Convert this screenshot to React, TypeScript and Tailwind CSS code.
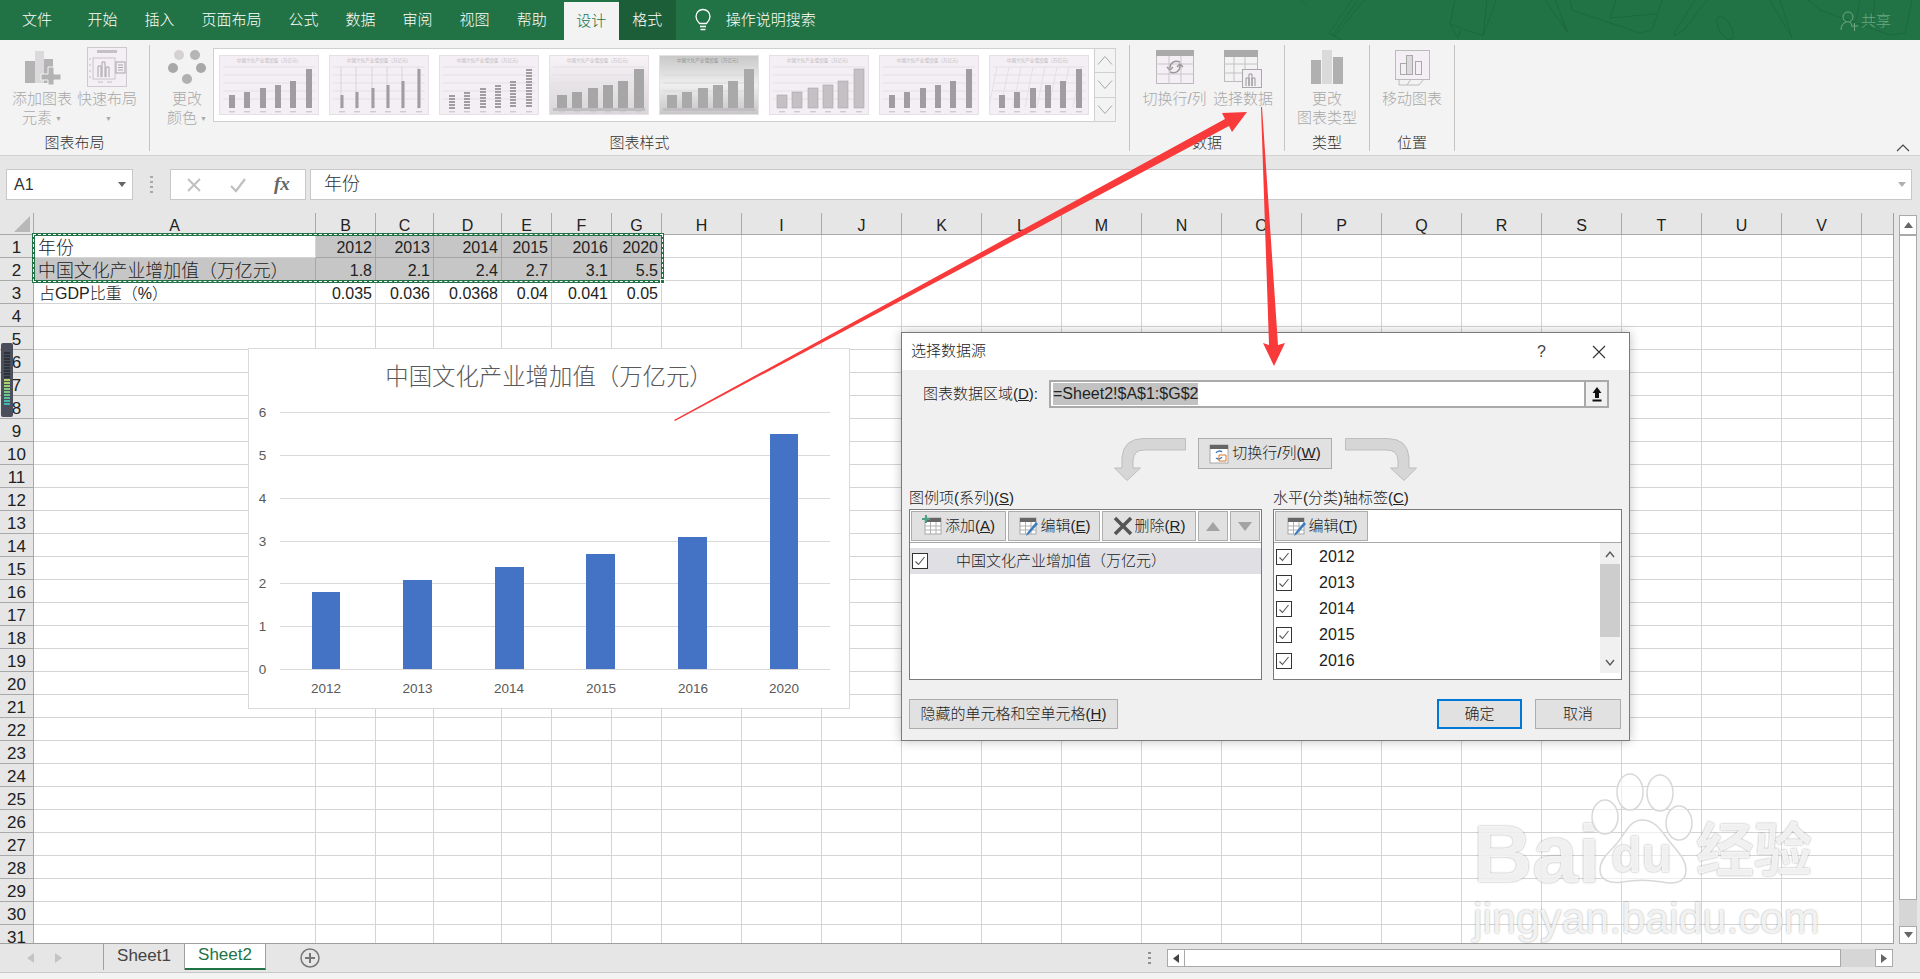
import React from 'react';

const tabs = ['开始', '插入', '页面布局', '公式', '数据', '审阅', '视图', '帮助'];
const colLabels = ['A', 'B', 'C', 'D', 'E', 'F', 'G', 'H', 'I', 'J', 'K', 'L', 'M', 'N', 'O', 'P', 'Q', 'R', 'S', 'T', 'U', 'V', ''];
const rows = Array.from({ length: 31 }, (_, i) => i + 1);
const sheetData: Record<number, string[]> = {
  1: ['年份', '2012', '2013', '2014', '2015', '2016', '2020'],
  2: ['中国文化产业增加值（万亿元）', '1.8', '2.1', '2.4', '2.7', '3.1', '5.5'],
  3: ['占GDP比重（%）', '0.035', '0.036', '0.0368', '0.04', '0.041', '0.05'],
};

function Thumb({ variant }: { variant: number }) {
  const xs = [10, 25, 41, 56, 71, 87];
  const tops = [40, 37, 33, 30, 26, 14];
  const wide = variant >= 3 && variant !== 7;
  const w = variant === 1 ? 3 : wide && variant !== 6 ? 10 : 6;
  const bg = variant === 4 ? 'url(#thumbDark)' : variant === 3 ? 'url(#thumbLight)' : '#f4eff4';
  const bar = variant === 5 ? '#c4c0c4' : variant === 4 ? '#a9a9a9' : variant === 3 ? '#a6a6a6' : '#a09ca0';
  return (
    <svg width="100" height="60" viewBox="0 0 100 60" className="shrink-0">
      <defs>
        <linearGradient id="thumbDark" x1="0" y1="0" x2="0" y2="1">
          <stop offset="0" stopColor="#c8c8c8" />
          <stop offset="0.5" stopColor="#efefef" />
          <stop offset="1" stopColor="#c6c6c6" />
        </linearGradient>
        <linearGradient id="thumbLight" x1="0" y1="0" x2="0" y2="1">
          <stop offset="0" stopColor="#f7f3f7" />
          <stop offset="1" stopColor="#d8d6d8" />
        </linearGradient>
      </defs>
      <rect x="0.5" y="0.5" width="99" height="59" fill={bg} stroke="#e6e0e6" />
      <text x="50" y="7" fontSize="4.6" textAnchor="middle" fill={variant === 4 ? '#777' : '#a8a4a8'}>
        中国文化产业增加值（万亿元）
      </text>
      {[12, 20, 28, 36, 44].map((y) => (
        <line key={y} x1="4" x2="96" y1={y} y2={y} stroke={variant === 4 ? '#d8d8d8' : '#e4dfe4'} strokeWidth="1" />
      ))}
      {variant === 1 && xs.map((x) => <line key={x} x1={x + 2} x2={x + 2} y1="12" y2="54" stroke="#d9d4d9" />)}
      {variant === 7 &&
        [8, 20, 32, 44, 56, 68, 80, 92].map((x) => <line key={x} x1={x} x2={x - 8} y1="12" y2="52" stroke="#e4dfe4" />)}
      {xs.map((x, i) => {
        const bx = x + (6 - w) / 2;
        if (variant === 2) {
          const bands = [];
          for (let y = tops[i]; y < 53; y += 3) {
            bands.push(<rect key={y} x={bx} y={y} width={w} height="2" fill="#a09ca0" />);
          }
          return <g key={x}>{bands}</g>;
        }
        return (
          <rect
            key={x}
            x={bx}
            y={tops[i]}
            width={w}
            height={53 - tops[i]}
            fill={bar}
            stroke={variant === 5 ? '#a9a5a9' : 'none'}
            strokeWidth="0.6"
          />
        );
      })}
      {(variant === 3 || variant === 4) && <rect x="4" y="53" width="92" height="3" fill="#c0bec0" />}
      {xs.map((x) => (
        <rect key={x} x={x} y="56" width="6" height="1.4" fill="#cfcacf" />
      ))}
    </svg>
  );
}

function BigBtn({ icon, lines, w, caret }: { icon: React.ReactNode; lines: string[]; w: string; caret?: boolean }) {
  return (
    <div className={`flex flex-col items-center ${w}`}>
      <div className="flex h-[44px] items-center justify-center">{icon}</div>
      {lines.map((l, i) => (
        <div key={i} className="h-[19px] whitespace-nowrap text-[15px] leading-[19px] text-[#a8a8a8] even:-mt-[0.5px]">
          {l}
          {caret && i === lines.length - 1 ? <span className="ml-[3px] align-middle text-[7px] text-[#a8a8a8]">▼</span> : null}
        </div>
      ))}
    </div>
  );
}

function RibbonGroup({ w, label, children }: { w: string; label: string; children: React.ReactNode }) {
  return (
    <div className={`mt-[5px] flex h-[106px] shrink-0 flex-col border-r border-[#c4c4c4] ${w}`}>
      <div className="flex h-[93px]">{children}</div>
      <div className="h-[16px] text-center text-[15px] leading-[16px] text-[#333]">{label}</div>
    </div>
  );
}

function SmallTable({ add, pencil }: { add?: boolean; pencil?: boolean }) {
  return (
    <svg width="22" height="22" viewBox="0 0 22 22" className="shrink-0">
      <rect x="3" y="3" width="16" height="16" fill="#fff" stroke="#a8a8a8" />
      <rect x="3" y="3" width="16" height="4" fill="#666" />
      <path d="M8.5 7v12M14 7v12M3 11h16M3 15h16" stroke="#b0b0b0" />
      {add && <path d="M3 0v8M-1 4h8" stroke="#4f9f80" strokeWidth="2" transform="translate(1 0)" />}
      {pencil && <path d="M19 7l2 2-9 10-3 2 1-3z" fill="#3d7cc0" />}
    </svg>
  );
}

function Check() {
  return (
    <svg width="16" height="16" viewBox="0 0 16 16" className="shrink-0">
      <rect x="0.5" y="0.5" width="15" height="15" fill="#fff" stroke="#333" />
      <path d="M3.5 8.5l3 3 6-7.5" fill="none" stroke="#555" strokeWidth="1.1" />
    </svg>
  );
}

function DlgBtn({ className, children }: { className: string; children: React.ReactNode }) {
  return (
    <div className={`flex h-[30px] items-center justify-center bg-[#e1e1e1] text-[15px] text-[#222] ${className}`}>
      {children}
    </div>
  );
}

function CurveArrow({ flip }: { flip?: boolean }) {
  return (
    <svg width="72" height="43" viewBox="0 0 72 43" className={`shrink-0 ${flip ? '-scale-x-100' : ''}`}>
      <path d="M71.5.5H30Q9 .5 8 20V30H.5L13 42.5 26.5 30H19V22Q20 12 30 12H71.5Z" fill="#d6d6d6" stroke="#bebebe" />
    </svg>
  );
}

function Dialog() {
  const grayBtn = 'border border-[#adadad]';
  return (
    <div className="absolute left-[901px] top-[332px] flex h-[409px] w-[729px] flex-col border border-[#7a7a7a] bg-[#f0f0f0] shadow-[0_0_10px_rgba(0,0,0,0.25)]">
      <div className="flex h-[37px] shrink-0 items-center bg-white pl-[9px] text-[15px] text-[#222]">
        <span>选择数据源</span>
        <span className="ml-[551px] text-[16px] text-[#444]">?</span>
        <svg width="14" height="14" viewBox="0 0 14 14" className="ml-[46px]">
          <path d="M1 1l12 12M13 1L1 13" stroke="#333" strokeWidth="1.1" />
        </svg>
      </div>
      <div className="flex flex-col pl-[7px] pr-[7px]">
        <div className="mt-[10px] flex h-[28px] items-center pl-[14px]">
          <span className="w-[126px] whitespace-nowrap text-[15px] text-[#222]">
            图表数据区域(<u>D</u>):
          </span>
          <div className="flex h-[28px] w-[560px] items-center border-2 border-[#a9a9a9] bg-white pl-[2px]">
            <span className="bg-[#c2c2c2] text-[16px] leading-[22px] text-[#222]">=Sheet2!$A$1:$G$2</span>
            <div className="ml-auto flex h-full w-[23px] items-center justify-center border-l-2 border-[#a9a9a9] bg-[#f0f0f0]">
              <svg width="12" height="16" viewBox="0 0 12 16">
                <path d="M6 1L1.5 7H4v5h4V7h2.5zM1.5 13.5h9v2h-9z" fill="#111" />
              </svg>
            </div>
          </div>
        </div>
        <div className="mt-[30px] flex h-[43px] items-start pl-[205px]">
          <CurveArrow />
          <div className="ml-[12px] flex h-[31px] w-[134px] items-center justify-center gap-[3px] border border-[#adadad] bg-[#e1e1e1] text-[15px] text-[#222]">
            <svg width="20" height="20" viewBox="0 0 20 20">
              <rect x="1" y="1" width="18" height="18" fill="#fff" stroke="#a8a8a8" />
              <rect x="1" y="1" width="18" height="4" fill="#666" />
              <path d="M13 8a4 4 0 0 0-6 1M7 14a4 4 0 0 0 6-1" fill="none" stroke="#3d7cc0" strokeWidth="1.4" />
              <path d="M10 11h7v6h-7z" fill="none" stroke="#d9772c" />
            </svg>
            <span>
              切换行/列(<u>W</u>)
            </span>
          </div>
          <div className="ml-[13px]">
            <CurveArrow flip />
          </div>
        </div>
        <div className="mt-[7px] flex gap-[11px]">
          <div className="w-[353px]">
            <div className="h-[20px] whitespace-nowrap text-[15px] leading-[20px] text-[#222]">
              图例项(系列)(<u>S</u>)
            </div>
            <div className="mt-[1px] h-[171px] border border-[#7a7a7a] bg-white">
              <div className="flex h-[33px] gap-[2px] border-b border-[#a8a8a8] pl-[1px] pt-[1px]">
                <DlgBtn className={`w-[95px] gap-[1px] ${grayBtn}`}>
                  <SmallTable add />
                  <span>
                    添加(<u>A</u>)
                  </span>
                </DlgBtn>
                <DlgBtn className={`w-[92px] gap-[1px] ${grayBtn}`}>
                  <SmallTable pencil />
                  <span>
                    编辑(<u>E</u>)
                  </span>
                </DlgBtn>
                <DlgBtn className={`w-[94px] gap-[2px] ${grayBtn}`}>
                  <svg width="20" height="20" viewBox="0 0 20 20">
                    <path d="M2 2l16 16M18 2L2 18" stroke="#555" strokeWidth="3.5" />
                  </svg>
                  <span>
                    删除(<u>R</u>)
                  </span>
                </DlgBtn>
                <DlgBtn className={`w-[30px] ${grayBtn}`}>
                  <svg width="14" height="9" viewBox="0 0 14 9">
                    <path d="M7 0l7 9H0z" fill="#a3a3a3" />
                  </svg>
                </DlgBtn>
                <DlgBtn className={`w-[30px] ${grayBtn}`}>
                  <svg width="14" height="9" viewBox="0 0 14 9">
                    <path d="M0 0h14L7 9z" fill="#a3a3a3" />
                  </svg>
                </DlgBtn>
              </div>
              <div className="mt-[5px] flex h-[26px] items-center bg-[#e0e0e4] pl-[2px] text-[15px] text-[#222]">
                <Check />
                <span className="ml-[28px] whitespace-nowrap">中国文化产业增加值（万亿元）</span>
              </div>
            </div>
          </div>
          <div className="w-[349px]">
            <div className="h-[20px] whitespace-nowrap text-[15px] leading-[20px] text-[#222]">
              水平(分类)轴标签(<u>C</u>)
            </div>
            <div className="mt-[1px] flex h-[171px] flex-col border border-[#7a7a7a] bg-white">
              <div className="flex h-[33px] shrink-0 border-b border-[#a8a8a8] pl-[1px] pt-[1px]">
                <DlgBtn className={`w-[93px] gap-[1px] ${grayBtn}`}>
                  <SmallTable pencil />
                  <span>
                    编辑(<u>T</u>)
                  </span>
                </DlgBtn>
              </div>
              <div className="flex h-[130px]">
                <div className="flex flex-1 flex-col pl-[2px] pt-[1px]">
                  {['2012', '2013', '2014', '2015', '2016'].map((y) => (
                    <div key={y} className="flex h-[26px] shrink-0 items-center">
                      <Check />
                      <span className="ml-[27px] text-[16px] text-[#222]">{y}</span>
                    </div>
                  ))}
                </div>
                <div className="mr-[1px] flex w-[20px] flex-col items-center bg-[#f0f0f0]">
                  <svg width="12" height="21" viewBox="0 0 12 21" className="shrink-0">
                    <path d="M2 14l4-5 4 5" fill="none" stroke="#555" strokeWidth="1.3" />
                  </svg>
                  <div className="h-[73px] w-full shrink-0 bg-[#cdcdcd]" />
                  <svg width="12" height="36" viewBox="0 0 12 36" className="shrink-0">
                    <path d="M2 23l4 5 4-5" fill="none" stroke="#555" strokeWidth="1.3" />
                  </svg>
                </div>
              </div>
            </div>
          </div>
        </div>
        <div className="mt-[19px] flex items-center pr-[1px]">
          <DlgBtn className={`w-[209px] ${grayBtn}`}>
            <span className="whitespace-nowrap">
              隐藏的单元格和空单元格(<u>H</u>)
            </span>
          </DlgBtn>
          <DlgBtn className="ml-auto w-[85px] border-2 border-[#0078d7]">确定</DlgBtn>
          <DlgBtn className={`ml-[13px] w-[86px] ${grayBtn}`}>取消</DlgBtn>
        </div>
      </div>
    </div>
  );
}

function ChartPanel() {
  const bars = [
    { x: 312, top: 592, w: 28, label: '2012', cx: 326 },
    { x: 403, top: 580, w: 29, label: '2013', cx: 417.5 },
    { x: 495, top: 567, w: 29, label: '2014', cx: 509 },
    { x: 586, top: 554, w: 29, label: '2015', cx: 601 },
    { x: 678, top: 537, w: 29, label: '2016', cx: 693 },
    { x: 770, top: 434, w: 28, label: '2020', cx: 784 },
  ];
  const ticks = [412, 455, 498, 541, 583, 626, 669];
  return (
    <div className="absolute left-[248px] top-[348px] h-[361px] w-[602px] border border-[#d9d9d9] bg-white">
      <div className="pt-[12px] text-center text-[23.4px] leading-[32px] text-[#595959]">中国文化产业增加值（万亿元）</div>
      <svg width="600" height="359" viewBox="249 349 600 359" className="absolute left-0 top-0">
        {ticks.map((y, i) => (
          <g key={y}>
            <line x1="280" x2="830" y1={y + 0.5} y2={y + 0.5} stroke="#d9d9d9" />
            <text x="262.5" y={y + 5} fontSize="13.5" textAnchor="middle" fill="#595959">
              {6 - i}
            </text>
          </g>
        ))}
        {bars.map((b) => (
          <g key={b.label}>
            <rect x={b.x} y={b.top} width={b.w} height={669 - b.top} fill="#4472c4" />
            <text x={b.cx} y="693" fontSize="13.5" textAnchor="middle" fill="#595959">
              {b.label}
            </text>
          </g>
        ))}
      </svg>
    </div>
  );
}

function Watermark() {
  const txt = 'absolute whitespace-nowrap leading-none text-white/85 [text-shadow:0_0_2px_rgba(0,0,0,0.4)]';
  return (
    <div className="pointer-events-none absolute left-[1460px] top-[770px] h-[180px] w-[370px]">
      <div className={`${txt} left-[13px] top-[43px] text-[82px] font-bold`}>Bai</div>
      <svg width="110" height="120" viewBox="1590 770 110 120" className="absolute left-[130px] top-0">
        <g fill="rgba(255,255,255,0.6)" stroke="#d8d8d8" strokeWidth="1.5">
          <ellipse cx="1605" cy="817" rx="13" ry="17" />
          <ellipse cx="1630" cy="792" rx="13" ry="18" />
          <ellipse cx="1660" cy="793" rx="13" ry="18" />
          <ellipse cx="1679" cy="823" rx="13" ry="17" />
          <path d="M1642 820c14 0 20 12 28 22 10 12 16 18 16 28 0 14-14 14-24 12-12-2-28-2-40 0-12 2-22-2-22-12 0-12 10-18 18-28 8-10 12-22 24-22z" />
        </g>
      </svg>
      <div className={`${txt} left-[151px] top-[60px] text-[50px] font-bold`}>du</div>
      <div className={`${txt} left-[236px] top-[52px] text-[58px] font-bold`}>经验</div>
      <div className={`${txt} left-[13px] top-[127px] text-[43px]`}>jingyan.baidu.com</div>
    </div>
  );
}

function Doodles() {
  return (
    <svg width="620" height="40" viewBox="0 0 620 40" className="absolute right-0 top-0" fill="none" stroke="#1d683d" strokeWidth="1">
      <path d="M64 0L34 37M58 0L32 36M52 0L29 33L42 40M1 0L6 5" />
      <path d="M155 0L150 24L183 36L196 0M187 0L183 36M150 24L158 38L161 30" />
      <path d="M245 0L268 33L262 20M255 0L268 33" />
      <path d="M270 0L272 10L340 33L352 30L362 0M316 0L310 18L355 14" />
      <path d="M395 0L376 30L374 36L384 30L407 0" />
      <ellipse cx="425" cy="28" rx="6" ry="13" transform="rotate(-30 425 28)" />
      <path d="M470 0L492 38M480 0L492 38" />
      <path d="M508 0L520 10L590 35L605 33L612 0M560 0L556 20M575 0L572 24" />
    </svg>
  );
}

function Arrows() {
  return (
    <svg width="1920" height="979" viewBox="0 0 1920 979" className="pointer-events-none absolute left-0 top-0">
      <path d="M675 421L674 420L1225 119L1222 113L1247 112L1232 132L1229 126Z" fill="#f83a3a" />
      <path d="M1261 107L1262 107L1278 345L1285 343L1274 366L1263 343L1269 345Z" fill="#f83a3a" />
    </svg>
  );
}

export default function App() {
  return (
    <div className="relative flex h-[979px] w-[1920px] flex-col overflow-hidden bg-[#e6e6e6] font-['Liberation_Sans','Noto_Sans_CJK_SC',sans-serif] font-light">
      {/* title / tabs */}
      <div className="relative flex h-[40px] shrink-0 items-end bg-[#217346] pl-[8px] text-[15px] text-white">
        <Doodles />
        <div className="flex h-[40px] items-center px-[14px]">文件</div>
        <div className="ml-[8px] flex h-[40px]">
          {tabs.map((t) => (
            <div key={t} className="flex items-center px-[13.5px]">
              {t}
            </div>
          ))}
        </div>
        <div className="ml-[3.5px] flex h-[38px] items-center bg-[#f3f3f3] px-[12.5px] text-[#217346]">设计</div>
        <div className="flex h-[40px] items-center bg-[#1b5e38] px-[13.5px]">格式</div>
        <div className="ml-[18px] flex h-[40px] items-center">
          <svg width="18" height="24" viewBox="0 0 18 24" fill="none" stroke="#fff" strokeWidth="1.3">
            <path d="M5.5 15.5C3 13 2 11 2 8.5a7 7 0 0 1 14 0c0 2.5-1 4.5-3.5 7z" />
            <path d="M6 18.5h6M6.5 21.5h5" />
          </svg>
          <span className="ml-[14px]">操作说明搜索</span>
        </div>
        <div className="absolute left-[1840px] top-[10px] flex items-center text-[15px] text-[#6da883]">
          <svg width="18" height="20" viewBox="0 0 18 20" fill="none" stroke="#6da883" strokeWidth="1">
            <circle cx="8" cy="6" r="5" />
            <path d="M1 19c0-4 2-7 5-8M10 11l2 3M11 15h7M14.5 12v8" />
          </svg>
          <span className="ml-[3px]">共享</span>
        </div>
      </div>

      {/* ribbon */}
      <div className="relative flex h-[116px] shrink-0 border-b border-[#d2d2d2] bg-[#f3f3f3]">
        <RibbonGroup w="w-[150px]" label="图表布局">
          <div className="flex gap-[5px] pl-[12px]">
            <BigBtn
              w="w-[60px]"
              lines={['添加图表', '元素']}
              caret
              icon={
                <svg width="38" height="36" viewBox="0 0 38 36">
                  <rect x="2" y="12" width="10" height="22" fill="#b3b3b3" />
                  <rect x="12" y="2" width="9" height="32" fill="#dcd9dc" />
                  <rect x="21" y="10" width="9" height="24" fill="#b3b3b3" />
                  <path d="M25 18h6v7h7v6h-7v5h-6v-5h-7v-6h7z" fill="#b3b3b3" stroke="#f3f3f3" />
                </svg>
              }
            />
            <BigBtn
              w="w-[60px]"
              lines={['快速布局']}
              icon={
                <svg width="40" height="40" viewBox="0 0 40 40" fill="none">
                  <rect x="0.5" y="0.5" width="39" height="39" fill="#f4eff4" stroke="#cfc9cf" />
                  <rect x="10" y="3" width="20" height="3" fill="#c4c0c4" />
                  <rect x="6" y="11" width="22" height="21" stroke="#c9c4c9" />
                  <path d="M11 30V19h3v11M15 30V15h3v15M19 30V20h3v10" stroke="#a8a4a8" />
                  <rect x="29" y="15" width="9" height="11" stroke="#a8a4a8" />
                  <path d="M31 18h5M31 20.5h5M31 23h5" stroke="#a8a4a8" />
                  <path d="M2 12h2M2 18h2M2 24h2M2 30h2M11 35h5M20 35h5" stroke="#c0bcc0" />
                </svg>
              }
            />
          </div>
          <div className="absolute left-[105px] top-[74px] text-[7px] text-[#a8a8a8]">▼</div>
        </RibbonGroup>
        <RibbonGroup w="w-[980px]" label="图表样式">
          <div className="ml-[15px] w-[44px]">
            <BigBtn
              w="w-[44px]"
              lines={['更改', '颜色']}
              caret
              icon={
                <svg width="38" height="36" viewBox="0 0 38 36">
                  <circle cx="11" cy="6" r="5" fill="#d4d0d4" />
                  <circle cx="27" cy="6" r="5" fill="#b5b5b5" />
                  <circle cx="5" cy="19" r="5" fill="#a8a8a8" />
                  <circle cx="33" cy="19" r="5" fill="#a8a8a8" />
                  <circle cx="19" cy="30" r="5" fill="#b0b0b0" />
                </svg>
              }
            />
          </div>
          <div className="ml-[4px] mt-[3px] flex h-[74px] w-[903px]">
            <div className="flex h-full w-[882px] shrink-0 items-center gap-[10px] bg-white px-[6px] shadow-[inset_0_0_0_1px_#d0d0d0]">
              {[0, 1, 2, 3, 4, 5, 6, 7].map((v) => (
                <Thumb key={v} variant={v} />
              ))}
            </div>
            <div className="flex w-[21px] shrink-0 flex-col border border-l-0 border-[#d0d0d0]">
              {[0, 1, 2].map((i) => (
                <div key={i} className={`flex flex-1 items-center justify-center ${i > 0 ? 'border-t border-[#d0d0d0]' : ''}`}>
                  <svg width="16" height="11" viewBox="0 0 16 11" fill="none" stroke="#a8a8a8">
                    {i === 0 ? <path d="M1 9.5L8 1.5l7 8" /> : <path d="M1 1.5l7 8 7-8" />}
                  </svg>
                </div>
              ))}
            </div>
          </div>
        </RibbonGroup>
        <RibbonGroup w="w-[155px]" label="数据">
          <div className="flex gap-[6px] pl-[12px]">
            <BigBtn
              w="w-[65px]"
              lines={['切换行/列']}
              icon={
                <svg width="38" height="34" viewBox="0 0 38 34" fill="none">
                  <rect x="0.5" y="0.5" width="37" height="33" fill="#f4eff4" stroke="#bdbabd" />
                  <rect x="0" y="0" width="38" height="6" fill="#aaa" />
                  <path d="M13 6v28M25 6v28M0 14h38M0 24h38" stroke="#c9c5c9" />
                  <path d="M24 12c-6-2-10 1-10 6M14 22c6 2 10-1 10-6M11 17l3 3 3-3M21 17l3-3 3 3" stroke="#999" strokeWidth="1.5" />
                </svg>
              }
            />
            <BigBtn
              w="w-[60px]"
              lines={['选择数据']}
              icon={
                <svg width="38" height="38" viewBox="0 0 38 38" fill="none" className="mt-[3px]">
                  <rect x="0.5" y="0.5" width="33" height="31" fill="#f3f3f3" stroke="#bdbabd" />
                  <rect x="0" y="0" width="34" height="7" fill="#aaa" />
                  <path d="M10 7v25M21 7v25M0 14h34M0 23h34" stroke="#c4c0c4" />
                  <rect x="18.5" y="19.5" width="19" height="18" fill="#f4eff4" stroke="#a8a8a8" />
                  <path d="M22 36V28h3v8M25 36V24h3v12M28 36v-8h3v8" stroke="#999" />
                </svg>
              }
            />
          </div>
        </RibbonGroup>
        <RibbonGroup w="w-[85px]" label="类型">
          <div className="flex w-full justify-center">
            <BigBtn
              w="w-[60px]"
              lines={['更改', '图表类型']}
              icon={
                <svg width="32" height="34" viewBox="0 0 32 34">
                  <rect x="0" y="10" width="10" height="24" fill="#b0b0b0" />
                  <rect x="11" y="0" width="10" height="34" fill="#dcd9dc" />
                  <rect x="22" y="7" width="10" height="27" fill="#b0b0b0" />
                </svg>
              }
            />
          </div>
        </RibbonGroup>
        <RibbonGroup w="w-[85px]" label="位置">
          <div className="flex w-full justify-center">
            <BigBtn
              w="w-[62px]"
              lines={['移动图表']}
              icon={
                <svg width="35" height="36" viewBox="0 0 35 36" fill="none" className="mt-[2px]">
                  <path d="M4 29v6h20l5-6" stroke="#bdbabd" />
                  <path d="M12 35l4-6" stroke="#bdbabd" />
                  <rect x="0.5" y="0.5" width="34" height="29" fill="#f4eff4" stroke="#bdbabd" />
                  <rect x="5.5" y="13.5" width="6" height="11" stroke="#a8a8a8" />
                  <rect x="11.5" y="5.5" width="6" height="19" fill="#dcd9dc" stroke="#a8a8a8" />
                  <rect x="20.5" y="11.5" width="6" height="13" stroke="#a8a8a8" />
                </svg>
              }
            />
          </div>
        </RibbonGroup>
        <div className="flex flex-1 items-end justify-end pb-[3px] pr-[10px]">
          <svg width="14" height="8" viewBox="0 0 14 8" fill="none" stroke="#444" strokeWidth="1.1">
            <path d="M1 7l6-6 6 6" />
          </svg>
        </div>
      </div>

      {/* formula bar */}
      <div className="flex h-[57px] shrink-0 pl-[6px] pt-[13px]">
        <div className="flex h-[31px] w-[127px] items-center justify-between border border-[#c8c8c8] bg-white pl-[7px] pr-[6px] text-[16px] text-[#333]">
          A1
          <svg width="8" height="5" viewBox="0 0 8 5">
            <path d="M0 0h8L4 5z" fill="#666" />
          </svg>
        </div>
        <div className="flex h-[31px] w-[37px] flex-col items-center justify-center gap-[3px]">
          {[0, 1, 2, 3].map((i) => (
            <div key={i} className="h-[2px] w-[3px] bg-[#a8a8a8]" />
          ))}
        </div>
        <div className="flex h-[31px] w-[136px] items-center border border-[#c8c8c8] bg-white">
          <svg width="16" height="16" viewBox="0 0 16 16" className="ml-[15px]">
            <path d="M2 2l12 12M14 2L2 14" stroke="#c0c0c0" strokeWidth="2" />
          </svg>
          <svg width="18" height="16" viewBox="0 0 18 16" className="ml-[27px]">
            <path d="M2 9l5 5L16 2" fill="none" stroke="#c0c0c0" strokeWidth="2.2" />
          </svg>
          <span className="ml-[27px] font-['Liberation_Serif',serif] text-[19px] font-bold italic text-[#666]">fx</span>
        </div>
        <div className="ml-[4px] flex h-[31px] w-[1602px] items-center justify-between border border-[#c8c8c8] bg-white pl-[13px] pr-[5px] text-[18px] text-[#333]">
          年份
          <svg width="8" height="5" viewBox="0 0 8 5">
            <path d="M0 0h8L4 5z" fill="#b0b0b0" />
          </svg>
        </div>
      </div>

      {/* sheet */}
      <div className="flex h-[731px] shrink-0">
        <div className="h-full w-[1894px] shrink-0 overflow-hidden border-b border-r border-[#a0a0a0] bg-white">
          <div className="grid auto-rows-[23px] grid-cols-[34px_282px_60px_58px_68px_50px_60px_50px_repeat(15,80px)_32px] [grid-template-rows:22px]">
            <div className="relative border-b border-r border-[#a9a9a9] bg-[#e6e6e6]">
              <div className="absolute bottom-[2px] right-[3px] h-0 w-0 border-b-[16px] border-l-[16px] border-b-[#b8b8b8] border-l-transparent" />
            </div>
            {colLabels.map((c, i) => (
              <div
                key={i}
                className="flex items-center justify-center border-b border-r border-[#a9a9a9] bg-[#e6e6e6] pt-[4px] text-[16px] text-[#222]"
              >
                {c}
              </div>
            ))}
            {rows.map((r) => (
              <React.Fragment key={r}>
                <div className="flex items-center justify-center border-b border-r border-[#a9a9a9] bg-[#e6e6e6] pt-[4px] text-[17px] text-[#222]">
                  {r}
                </div>
                {colLabels.map((_, c) => {
                  const val = sheetData[r]?.[c];
                  const grey = (r === 1 && c > 0 && c < 7) || (r === 2 && c < 7);
                  const text = c === 0 ? (r === 3 ? 'text-[16px] pl-[5px]' : 'text-[17.9px] pl-[4px]') : 'text-[16px] justify-end pr-[3px]';
                  return (
                    <div
                      key={c}
                      className={`flex items-center overflow-visible whitespace-nowrap border-b border-r pt-[4px] text-[#222] ${text} ${
                        grey ? 'border-[#a6a6a6] bg-[#c6c6c6]' : 'border-[#d4d4d4]'
                      }`}
                    >
                      {val}
                    </div>
                  );
                })}
              </React.Fragment>
            ))}
          </div>
        </div>
        <div className="flex h-full flex-1 flex-col pl-[5px] pt-[2px]">
          <div className="flex h-[20px] w-[18px] shrink-0 items-center justify-center border border-[#a9a9a9] bg-white">
            <svg width="9" height="6" viewBox="0 0 9 6">
              <path d="M4.5 0L9 6H0z" fill="#666" />
            </svg>
          </div>
          <div className="h-[665px] w-[18px] shrink-0 border border-[#a9a9a9] bg-white" />
          <div className="h-[26px] w-[18px] shrink-0 bg-[#d6d6d6]" />
          <div className="flex h-[18px] w-[18px] shrink-0 items-center justify-center border border-[#a9a9a9] bg-white">
            <svg width="9" height="6" viewBox="0 0 9 6">
              <path d="M0 0h9L4.5 6z" fill="#666" />
            </svg>
          </div>
        </div>
      </div>

      {/* sheet tabs */}
      <div className="flex h-[29px] shrink-0 border-b border-[#c8c8c8]">
        <div className="flex w-[103px] shrink-0 items-center gap-[20px] pl-[27px]">
          <svg width="8" height="10" viewBox="0 0 8 10">
            <path d="M7 0v10L0 5z" fill="#c4c4c4" />
          </svg>
          <svg width="8" height="10" viewBox="0 0 8 10">
            <path d="M0 0v10l7-5z" fill="#c4c4c4" />
          </svg>
        </div>
        <div className="flex h-[26px] w-[82px] shrink-0 items-center justify-center border-l border-r border-[#a0a0a0] pb-[3px] text-[17px] text-[#444]">
          Sheet1
        </div>
        <div className="flex h-[26px] w-[81px] shrink-0 items-center justify-center border-b-[2px] border-r border-b-[#217346] border-r-[#a0a0a0] bg-white pb-[2px] text-[17px] text-[#217346]">
          Sheet2
        </div>
        <div className="ml-[34px] flex items-center pb-[1px]">
          <svg width="20" height="20" viewBox="0 0 20 20" fill="none" stroke="#777">
            <circle cx="10" cy="10" r="9" strokeWidth="1.5" />
            <path d="M5 10h10M10 5v10" strokeWidth="2" />
          </svg>
        </div>
        <div className="ml-[828px] flex w-[3px] flex-col justify-center gap-[3px]">
          {[0, 1, 2].map((i) => (
            <div key={i} className="h-[2px] w-[3px] bg-[#909090]" />
          ))}
        </div>
        <div className="ml-[16px] mt-[5px] flex h-[18px] w-[726px] shrink-0">
          <div className="flex w-[18px] items-center justify-center border border-[#a9a9a9] bg-white">
            <svg width="6" height="9" viewBox="0 0 6 9">
              <path d="M6 0v9L0 4.5z" fill="#444" />
            </svg>
          </div>
          <div className="w-[656px] border border-l-0 border-[#a9a9a9] bg-white" />
          <div className="w-[34px] bg-[#d6d6d6]" />
          <div className="flex w-[18px] items-center justify-center border border-[#a9a9a9] bg-white">
            <svg width="6" height="9" viewBox="0 0 6 9">
              <path d="M0 0v9l6-4.5z" fill="#666" />
            </svg>
          </div>
        </div>
      </div>
      <div className="flex-1 bg-[#f3f3f3]" />

      {/* copy selection */}
      <div className="absolute left-[32px] top-[233px] h-[50px] w-[632px] border-[3px] border-[#217346]">
        <div className="absolute -inset-[2px] border border-dashed border-white" />
        <div className="absolute -bottom-[4px] -right-[4px] h-[5px] w-[5px] border border-white bg-[#217346]" />
      </div>

      <ChartPanel />

      {/* little widget stuck to the left edge */}
      <div className="absolute left-[1px] top-[343px] flex h-[74px] w-[12px] flex-col items-center gap-[1.5px] rounded-[2px] bg-[#4a4f5b] pt-[9px]">
        {['#2e323a', '#2e323a', '#2e323a', '#2e323a', '#2e323a', '#2e323a', '#2e323a', '#2e323a', '#2e323a', '#b8d26a', '#a8d26a', '#98d070', '#88cc7a', '#78c884', '#68c490', '#58c09c', '#48bca8', '#40b8b0'].map((col, i) => (
          <div key={i} className="h-[1.5px] w-[6px]" style={{ backgroundColor: col }} />
        ))}
      </div>

      <Watermark />
      <Dialog />
      <Arrows />
    </div>
  );
}
